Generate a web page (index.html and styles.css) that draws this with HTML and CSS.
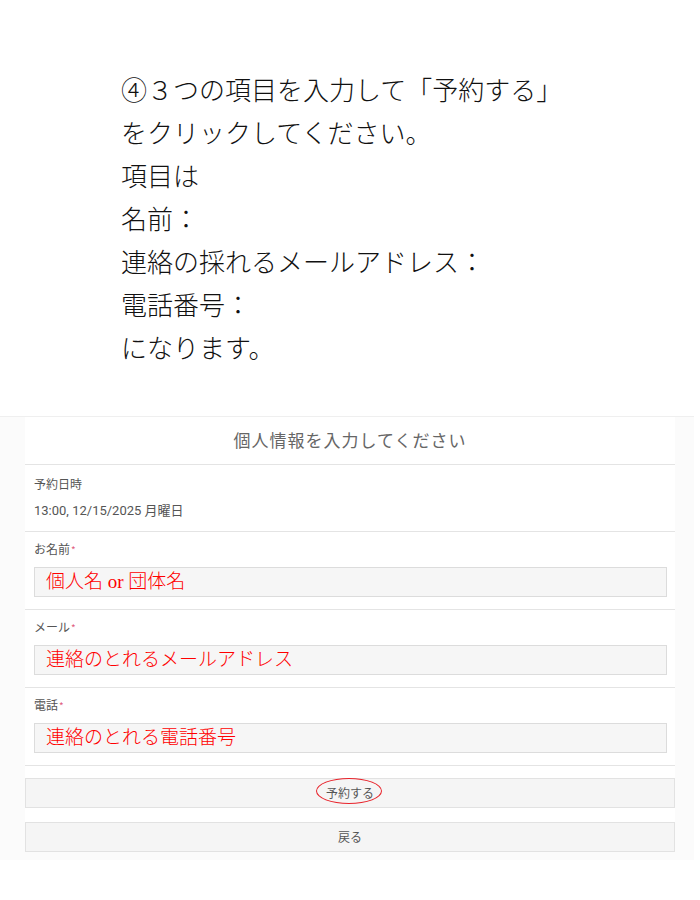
FILE: index.html
```html
<!DOCTYPE html>
<html lang="ja">
<head>
  <meta charset="UTF-8" />
  <meta name="viewport" content="width=device-width, initial-scale=1.0"/>
  <title>予約の手順</title>
  <link rel="stylesheet" href="styles.css">
</head>
<body>

  <div class="intro">
    <p>④３つの項目を入力して「予約する」</p>
    <p>をクリックしてください。</p>
    <p>項目は</p>
    <p>名前：</p>
    <p>連絡の採れるメールアドレス：</p>
    <p>電話番号：</p>
    <p>になります。</p>
  </div>

  <div class="captura">
    <div class="cartao">
      <div class="titulo">個人情報を入力してください</div>

      <div class="campo campo-data">
        <div class="rotulo">予約日時</div>
        <div class="valor">13:00, 12/15/2025 月曜日</div>
      </div>

      <div class="campo">
        <div class="rotulo">お名前<span class="obrig">*</span></div>
        <div class="entrada">個人名 or 団体名</div>
      </div>

      <div class="campo">
        <div class="rotulo">メール<span class="obrig">*</span></div>
        <div class="entrada">連絡のとれるメールアドレス</div>
      </div>

      <div class="campo">
        <div class="rotulo">電話<span class="obrig">*</span></div>
        <div class="entrada">連絡のとれる電話番号</div>
      </div>

      <div class="botoes">
        <div class="botao">
          <span class="marcado">予約する<span class="elipse"></span></span>
        </div>
        <div class="botao">戻る</div>
      </div>
    </div>
  </div>

</body>
</html>
```

FILE: styles.css
```css
body {
  font-family: 'Noto Sans CJK JP', sans-serif;
  background-color: #fff;
  color: #111;
  margin: 0;
  padding: 0;
}

.intro {
  padding: 67px 0 0 121px;
  font-size: 26px;
  font-weight: 300;
  line-height: 43px;
}

.intro p {
  margin: 0;
}

.captura {
  width: 650px;
  margin-top: 48px;
  padding: 0 19px 8px 25px;
  background-color: #fbfbfb;
  border-top: 1px solid #efefef;
}

.cartao {
  background-color: #fff;
  color: #555;
}

.titulo {
  height: 47px;
  line-height: 46px;
  text-align: center;
  font-size: 17px;
  letter-spacing: 1px;
  color: #666;
  border-bottom: 1px solid #e4e4e4;
}

.campo {
  padding: 9px 8px 12px 9px;
  border-bottom: 1px solid #e4e4e4;
}

.campo-data {
  padding-top: 11px;
}

.rotulo {
  font-size: 12px;
  line-height: 16px;
}

.obrig {
  color: #e0607e;
  font-size: 10px;
  margin-left: 1px;
}

.valor {
  margin-top: 11px;
  font-family: Roboto, 'Noto Sans CJK JP', sans-serif;
  font-size: 13px;
  line-height: 16px;
}

.entrada {
  margin-top: 9px;
  height: 28px;
  line-height: 28px;
  padding: 0 11px;
  background-color: #f6f6f6;
  border: 1px solid #dcdcdc;
  color: #ff0000;
  font-family: 'Liberation Serif', 'Noto Sans CJK JP', serif;
  font-size: 19px;
  font-weight: 300;
}

.botoes {
  display: flex;
  flex-direction: column;
  gap: 14px;
  padding-top: 12px;
}

.botao {
  height: 28px;
  line-height: 28px;
  text-align: center;
  font-size: 12px;
  color: #555;
  background-color: #f5f5f5;
  border: 1px solid #e2e2e2;
}

.marcado {
  position: relative;
}

.elipse {
  position: absolute;
  left: -10px;
  top: -6px;
  width: 64px;
  height: 24px;
  border: 1.5px solid #e8232b;
  border-radius: 50%;
}
```
